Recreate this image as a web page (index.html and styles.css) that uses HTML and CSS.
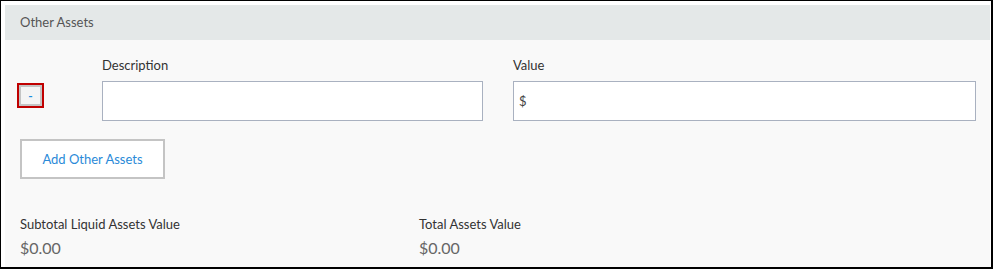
FILE: index.html
```html
<!DOCTYPE html>
<html lang="en">
<head>
    <meta charset="UTF-8">
    <title>Other Assets</title>
    <link rel="stylesheet" href="styles.css">
</head>
<body>
<div class="frame">
    <div class="panel">
        <div class="panel-head">Other Assets</div>
        <div class="asset-row">
            <div class="remove-col">
                <button class="btn-remove" type="button">-</button>
            </div>
            <div class="field field-desc">
                <label for="desc">Description</label>
                <input type="text" id="desc" value="">
            </div>
            <div class="field field-value">
                <label for="val">Value</label>
                <input type="text" id="val" value="$">
            </div>
        </div>
        <button class="btn-add" type="button">Add Other Assets</button>
        <div class="totals">
            <div class="total">
                <p class="total-label">Subtotal Liquid Assets Value</p>
                <p class="total-amount">$0.00</p>
            </div>
            <div class="total">
                <p class="total-label">Total Assets Value</p>
                <p class="total-amount">$0.00</p>
            </div>
        </div>
    </div>
</div>
</body>
</html>
```

FILE: styles.css
```css
* {
    margin: 0;
    padding: 0;
    box-sizing: border-box;
}
body {
    background: #fff;
    font-family: "Lato", "Open Sans", sans-serif;
    color: #333;
}
.frame {
    width: 993px;
    height: 269px;
    border: 1px solid #000;
    border-right-width: 2px;
    border-bottom-width: 2px;
    padding: 4px 1px 0 4px;
    background: #fff;
}
.panel {
    height: 100%;
    background: #f9f9f9;
}
.panel-head {
    height: 35px;
    line-height: 35px;
    padding-left: 15px;
    background: #e4e8e8;
    font-size: 13px;
    color: #555;
}
.asset-row {
    display: flex;
    padding: 17px 0 0 12px;
}
.remove-col {
    width: 85px;
    padding: 28px 0 0 2px;
}
.btn-remove {
    display: block;
    width: 23px;
    height: 21px;
    border: 2px solid #c4c4c4;
    outline: 2px solid #c00000;
    background: #f4f4f4;
    color: #1a8ee0;
    font: bold 12px/17px "Lato", sans-serif;
    cursor: pointer;
}
.field label {
    display: block;
    height: 24px;
    font-size: 13px;
    color: #333;
}
.field input {
    display: block;
    height: 40px;
    border: 1px solid #a9b1c0;
    background: #fff;
    padding: 0 5px;
    font: 13px "Lato", sans-serif;
    color: #444;
    outline: none;
}
.field-desc {
    width: 411px;
}
.field-desc input {
    width: 381px;
}
.field-value input {
    width: 463px;
}
.btn-add {
    display: block;
    width: 145px;
    height: 40px;
    margin: 18px 0 0 15px;
    border: 2px solid #c4c4c4;
    background: #fff;
    color: #2a8ad8;
    font: 13px "Lato", sans-serif;
    cursor: pointer;
}
.totals {
    display: flex;
    padding: 36px 0 0 15px;
}
.total {
    width: 399px;
}
.total-label {
    font-size: 13px;
    color: #333;
    line-height: 18px;
}
.total-amount {
    margin-top: 5px;
    font-size: 16px;
    color: #666;
    line-height: 20px;
}
```
